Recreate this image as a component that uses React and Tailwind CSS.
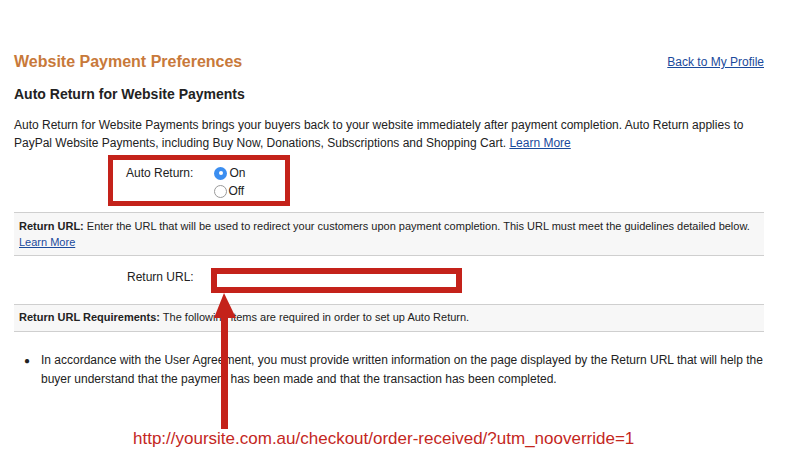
import React from 'react';

function RadioDot({ checked }) {
  return checked ? (
    <span className="inline-flex h-[13px] w-[13px] items-center justify-center rounded-full bg-[#3b8ef0]">
      <span className="h-[4px] w-[4px] rounded-full bg-white" />
    </span>
  ) : (
    <span className="inline-block h-[13px] w-[13px] rounded-full border border-[#9a9a9a] bg-white" />
  );
}

function Arrow() {
  return (
    <svg className="absolute left-[212px] top-[293px]" width="26" height="136" viewBox="0 0 26 136">
      <polygon points="12,0 2,25 24,25" fill="#c4221a" />
      <rect x="9" y="24" width="7" height="112" fill="#c4221a" />
    </svg>
  );
}

export default function App() {
  return (
    <div className="relative h-[470px] w-[789px] overflow-hidden bg-white font-['Liberation_Sans',Arial,sans-serif] text-[#333]">
      <div className="pl-[14px] pr-[25px] pt-[52px]">
        <div className="flex items-center justify-between">
          <h1 className="text-[16px] font-bold leading-[20px] text-[#c8793a]">Website Payment Preferences</h1>
          <a href="#" className="text-[12px] leading-[16px] text-[#1a4a9c] underline">Back to My Profile</a>
        </div>
        <h2 className="mt-[13px] text-[14px] font-bold leading-[18px] text-[#222]">Auto Return for Website Payments</h2>
        <p className="mt-[13px] text-[12px] leading-[18px] text-[#222]">
          Auto Return for Website Payments brings your buyers back to your website immediately after payment completion. Auto Return applies to PayPal Website Payments, including Buy Now, Donations, Subscriptions and Shopping Cart.{' '}
          <a href="#" className="text-[#1a4a9c] underline">Learn More</a>
        </p>
        <div className="ml-[94px] mt-[3px] flex h-[51px] w-[182px] gap-[21px] border-[5px] border-[#c4221a] pl-[13px] pt-[6px] text-[12px] leading-[14px] text-[#222]">
          <span>Auto Return:</span>
          <div className="flex flex-col gap-[4px]">
            <label className="flex items-center gap-[2px]"><RadioDot checked />On</label>
            <label className="flex items-center gap-[1px]"><RadioDot />Off</label>
          </div>
        </div>
        <div className="mt-[6px] border-y border-[#cfcfcf] bg-[#f7f7f7] px-[5px] pb-[5px] pt-[5px] text-[11px] leading-[16px] text-[#222]">
          <b>Return URL:</b> Enter the URL that will be used to redirect your customers upon payment completion. This URL must meet the guidelines detailed below.
          <br />
          <a href="#" className="text-[#1a4a9c] underline">Learn More</a>
        </div>
        <div className="flex h-[48px] items-center text-[12px] text-[#222]">
          <span className="-mt-[6px] ml-[113px] w-[84px]">Return URL:</span>
          <div className="h-[25px] w-[251px] border-[6px] border-[#c4221a] bg-white" />
        </div>
        <div className="border-y border-[#cfcfcf] bg-[#f7f7f7] px-[5px] pb-[7px] pt-[6px] text-[11px] leading-[13px] text-[#222]">
          <b>Return URL Requirements:</b> The following items are required in order to set up Auto Return.
        </div>
        <ul className="mt-[19px] flex text-[12px] leading-[19px] text-[#222]">
          <li className="flex">
            <span className="w-[27px] shrink-0 pl-[10px] text-[10px]">●</span>
            <span>In accordance with the User Agreement, you must provide written information on the page displayed by the Return URL that will help the buyer understand that the payment has been made and that the transaction has been completed.</span>
          </li>
        </ul>
        <div className="mt-[40px] pl-[119px] text-[17px] leading-[20px] text-[#c4271e]">
          http://yoursite.com.au/checkout/order-received/?utm_nooverride=1
        </div>
      </div>
      <Arrow />
    </div>
  );
}
